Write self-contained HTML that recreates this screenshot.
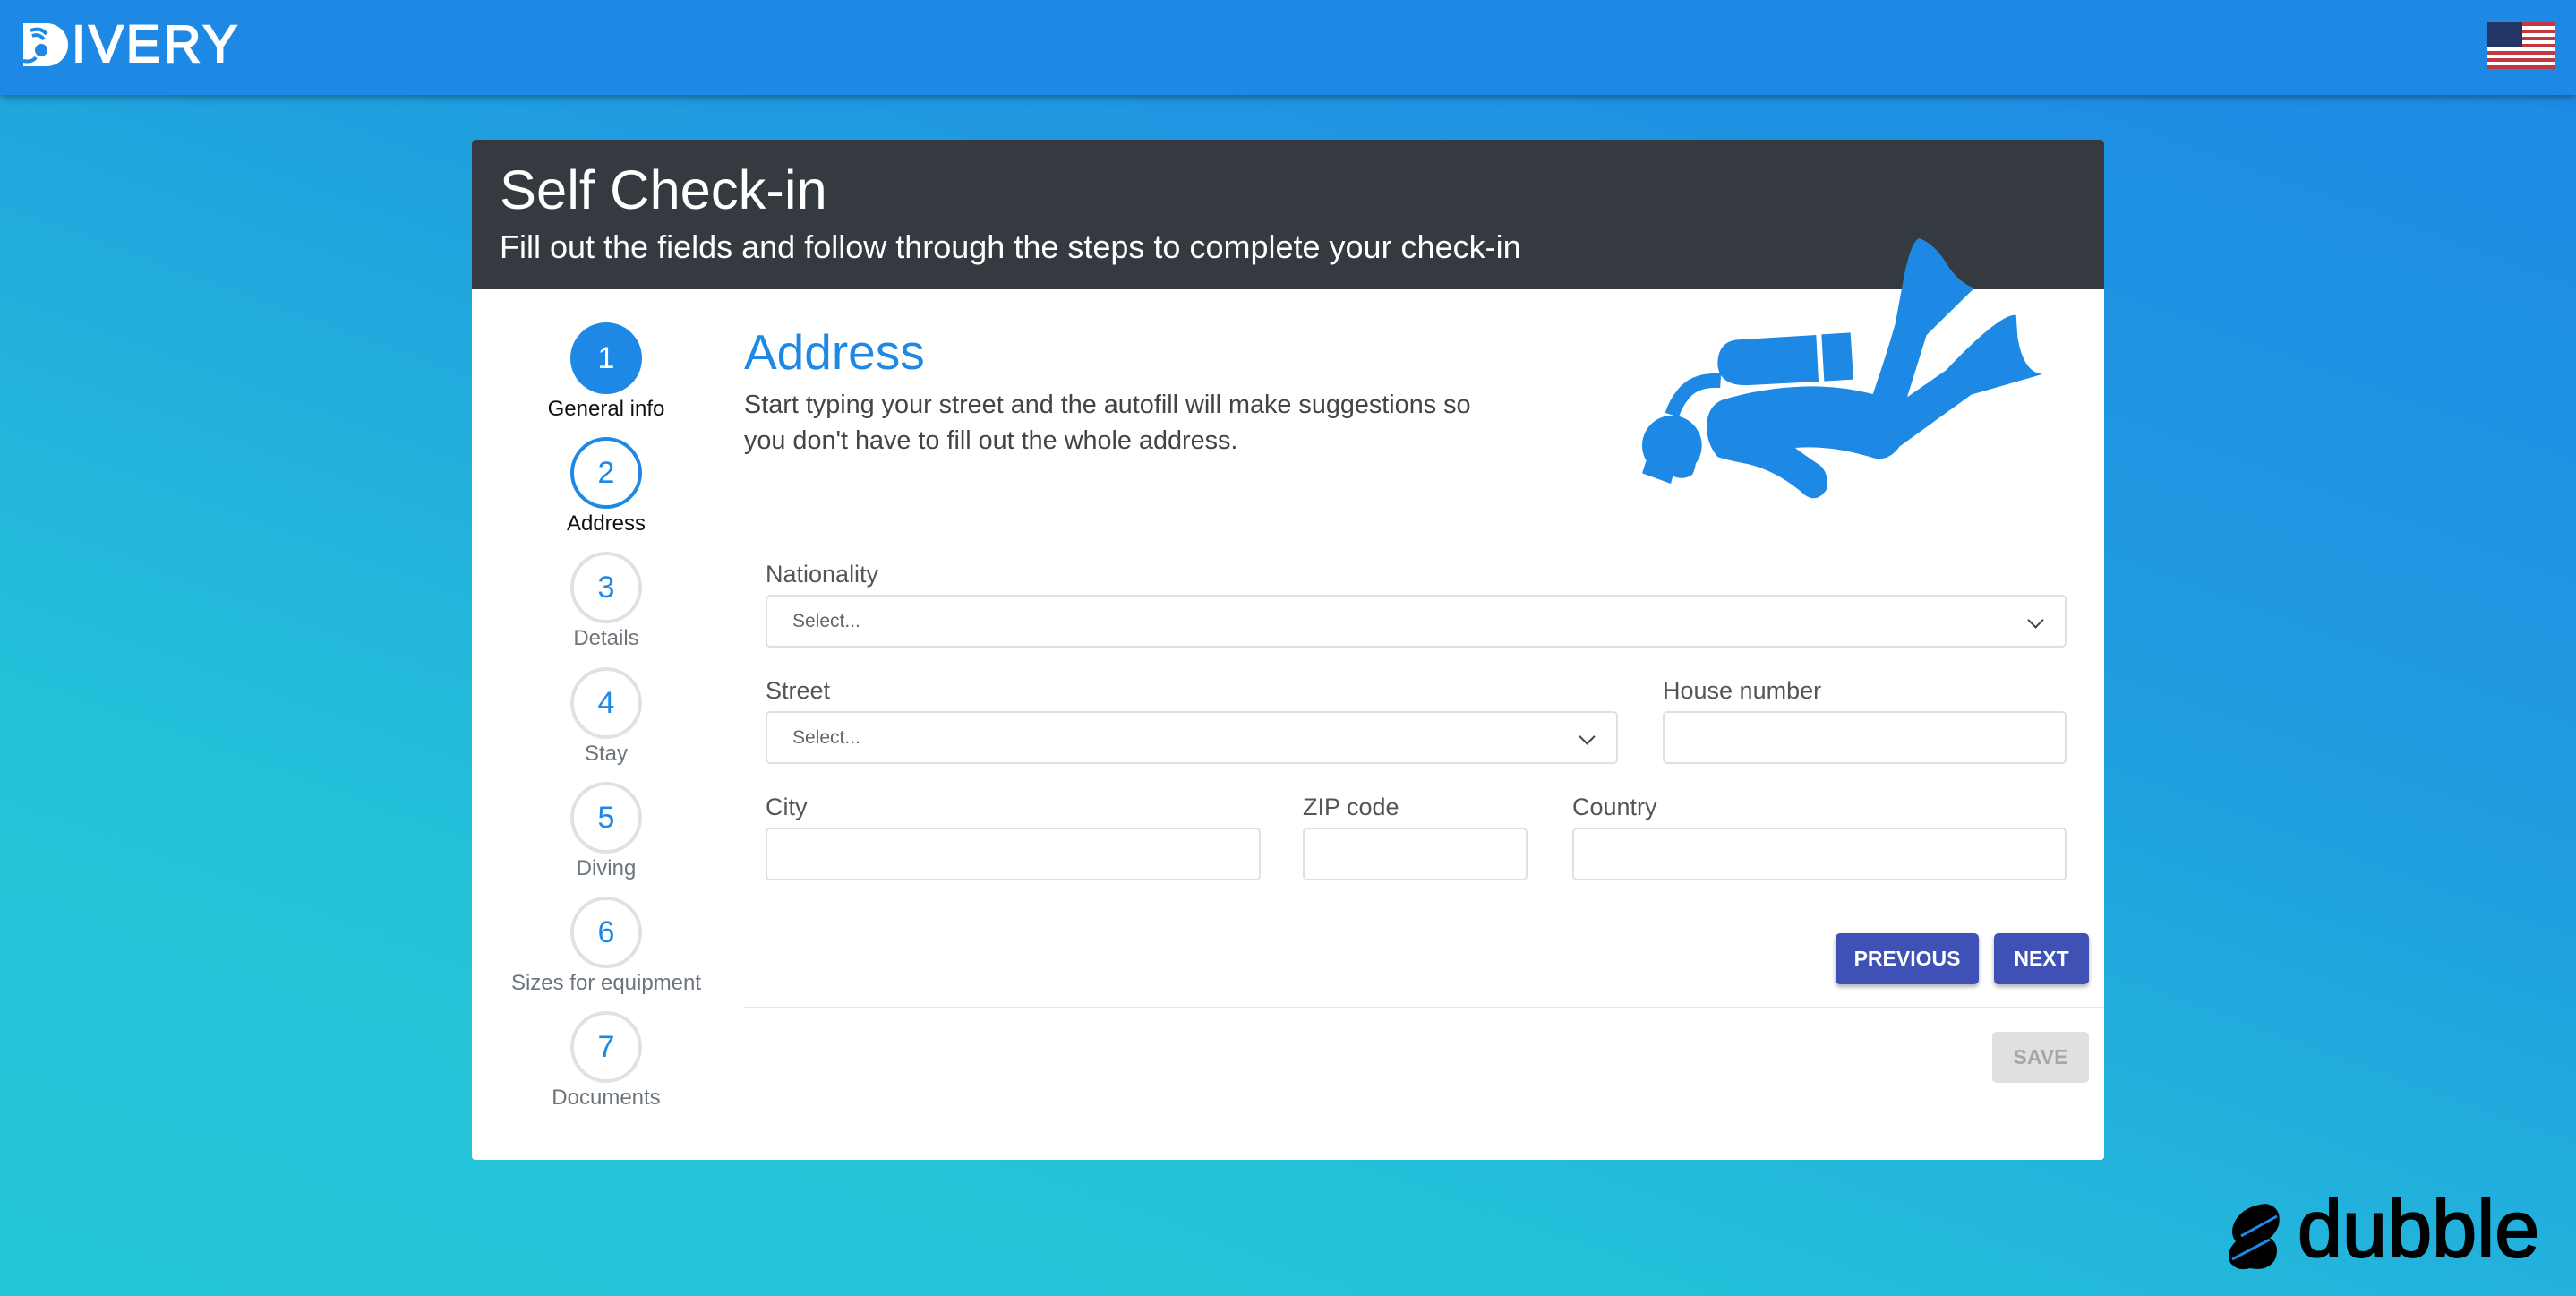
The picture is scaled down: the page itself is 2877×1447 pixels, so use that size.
<!DOCTYPE html>
<html><head><meta charset="utf-8"><style>
*{box-sizing:border-box;margin:0;padding:0}
body{width:2877px;height:1447px;overflow:hidden;font-family:"Liberation Sans",sans-serif;background:linear-gradient(200deg,#1e88e5 0%,#1f9ae0 35%,#25c3d9 75%,#26c6da 100%);position:relative}
.top{position:absolute;left:0;top:0;width:2877px;height:106px;background:#1e88e5;box-shadow:0 3px 8px rgba(0,0,0,.35)}
.card{position:absolute;left:527px;top:156px;width:1823px;height:1139px;background:#fff;border-radius:4px;overflow:hidden}
.dark{position:absolute;left:0;top:0;width:100%;height:167px;background:#343a40;color:#fff}
.abs{position:absolute}
.step{position:absolute;width:80px;height:80px;border-radius:50%;left:110px;display:flex;align-items:center;justify-content:center;font-size:34px;color:#1e88e5;border:4px solid #dee2e6;background:#fff}
.lbl{position:absolute;width:300px;left:0;text-align:center;font-size:24px;color:#6c757d}
.flbl{position:absolute;font-size:27px;color:#555}
.box{position:absolute;height:59px;border:2px solid #e0e0e0;border-radius:5px;background:#fff}
.sel{font-size:21px;color:#666;padding-left:28px;line-height:55px}
.chev{position:absolute;right:26px;top:20px;width:13px;height:13px;border-right:2.5px solid #444;border-bottom:2.5px solid #444;transform:rotate(45deg)}
.btn{position:absolute;height:57px;background:#3f51b5;color:#fff;font-size:23px;font-weight:bold;border-radius:5px;display:flex;align-items:center;justify-content:center;box-shadow:0 3px 5px rgba(0,0,0,.3)}
</style></head><body>
<div class="top">
<svg class="abs" style="left:22px;top:24px" width="60" height="52" viewBox="0 0 60 52"><path d="M4,2 H30 A24,24 0 0 1 30,50 H4 Z" fill="#fff"/><path d="M12,10 Q24,6 30,14 M14,16 Q22,13 27,20" stroke="#1e88e5" stroke-width="4" fill="none"/><circle cx="24" cy="32" r="7" fill="#1e88e5"/><path d="M4,44 Q14,46 18,40" stroke="#1e88e5" stroke-width="4" fill="none"/></svg>
<div class="abs" style="left:80px;top:20px;color:#fff;font-size:58px;letter-spacing:3px;line-height:60px;-webkit-text-stroke:2px #fff">IVERY</div>
<svg class="abs" style="left:2778px;top:25px" width="76" height="52" viewBox="0 0 76 52"><rect width="76" height="52" fill="#fff"/><g fill="#c0393f"><rect y="0" width="76" height="4"/><rect y="8" width="76" height="4"/><rect y="16" width="76" height="4"/><rect y="24" width="76" height="4"/><rect y="32" width="76" height="4"/><rect y="40" width="76" height="4"/><rect y="48" width="76" height="4"/></g><rect width="39" height="28" fill="#233566"/></svg>
</div>
<div class="card">
<div class="dark">
<div class="abs" style="left:31px;top:22px;font-size:61.5px;line-height:70px">Self Check-in</div>
<div class="abs" style="left:31px;top:99px;font-size:36px;line-height:42px">Fill out the fields and follow through the steps to complete your check-in</div>
</div>
<svg class="abs" style="left:1253px;top:94px" width="560" height="330" viewBox="0 0 1680 990"><g fill="#1e88e5"><path d="M480,388 L745,372 L753,528 L520,540 Q420,545 415,470 Q415,395 480,388 Z"/><path d="M763,370 L860,364 L870,521 L772,527 Z"/><path d="M425,525 Q340,520 300,570 Q275,600 262,640" stroke="#1e88e5" stroke-width="48" fill="none"/><circle cx="262" cy="742" r="100"/><path d="M180,780 L162,835 L258,870 L265,845 Q300,860 330,840 Q345,810 340,790 Z"/><path d="M430,590 Q380,610 378,680 Q380,740 415,780 Q440,790 520,805 Q620,830 710,910 Q750,935 780,890 Q790,840 760,810 Q700,770 675,750 Q800,740 940,785 Q990,795 1025,745 L1265,572 L1505,503 Q1440,500 1420,380 L1415,305 Q1360,300 1180,490 L1050,580 L1115,372 L1275,215 Q1220,195 1180,130 Q1140,65 1090,48 Q1060,60 1035,200 L1010,335 Q980,440 935,570 Q820,540 700,545 Q560,550 430,590 Z"/></g></svg>
<div class="step" style="top:204px;background:#1e88e5;border-color:#1e88e5;color:#fff">1</div>
<div class="lbl" style="top:287px;color:#111">General info</div>
<div class="step" style="top:332px;border-color:#1e88e5">2</div>
<div class="lbl" style="top:415px;color:#111">Address</div>
<div class="step" style="top:460px">3</div><div class="lbl" style="top:543px">Details</div>
<div class="step" style="top:589px">4</div><div class="lbl" style="top:672px">Stay</div>
<div class="step" style="top:717px">5</div><div class="lbl" style="top:800px">Diving</div>
<div class="step" style="top:845px">6</div><div class="lbl" style="top:928px">Sizes for equipment</div>
<div class="step" style="top:973px">7</div><div class="lbl" style="top:1056px">Documents</div>
<div class="abs" style="left:304px;top:206px;font-size:55px;color:#1e88e5;line-height:62px">Address</div>
<div class="abs" style="left:304px;top:276px;font-size:28.8px;color:#444;line-height:40px">Start typing your street and the autofill will make suggestions so<br>you don't have to fill out the whole address.</div>
<div class="flbl" style="left:328px;top:470px">Nationality</div>
<div class="box sel" style="left:328px;top:508px;width:1453px">Select...<div class="chev"></div></div>
<div class="flbl" style="left:328px;top:600px">Street</div>
<div class="box sel" style="left:328px;top:638px;width:952px">Select...<div class="chev"></div></div>
<div class="flbl" style="left:1330px;top:600px">House number</div>
<div class="box" style="left:1330px;top:638px;width:451px"></div>
<div class="flbl" style="left:328px;top:730px">City</div>
<div class="box" style="left:328px;top:768px;width:553px"></div>
<div class="flbl" style="left:928px;top:730px">ZIP code</div>
<div class="box" style="left:928px;top:768px;width:251px"></div>
<div class="flbl" style="left:1229px;top:730px">Country</div>
<div class="box" style="left:1229px;top:768px;width:552px"></div>
<div class="btn" style="left:1523px;top:886px;width:160px">PREVIOUS</div>
<div class="btn" style="left:1700px;top:886px;width:106px">NEXT</div>
<div class="abs" style="left:304px;top:968px;width:1519px;height:2px;background:#e3e3e3"></div>
<div class="btn" style="left:1698px;top:996px;width:108px;background:#e0e0e0;color:#a6a6a6;box-shadow:none">SAVE</div>
</div>
<svg class="abs" style="left:2483px;top:1340px" width="70" height="80" viewBox="0 0 70 80"><path d="M48,4 Q66,8 62,28 Q58,38 52,42 Q64,50 58,66 Q50,80 30,76 Q16,80 8,70 Q2,58 14,46 Q6,36 14,22 Q24,6 48,4 Z" fill="#000"/><path d="M20,40 L60,18 M10,66 L52,44" stroke="#1e88e5" stroke-width="3"/></svg>
<div class="abs" style="left:2566px;top:1318px;font-size:90px;line-height:110px;color:#000;-webkit-text-stroke:2px #000">dubble</div>
</body></html>
